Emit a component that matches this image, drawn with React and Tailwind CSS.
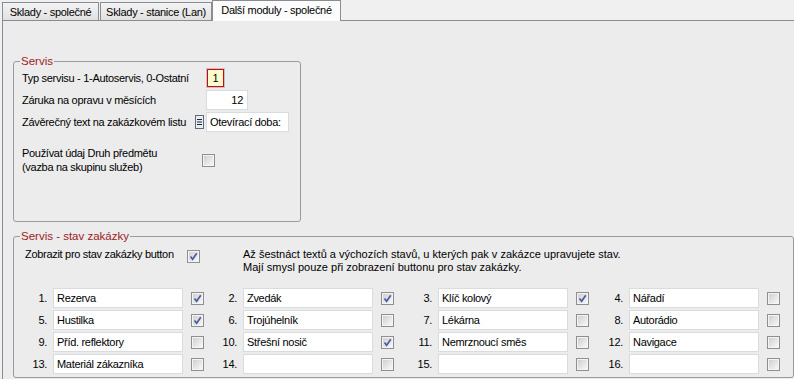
import React from "react";

const rows = [
  [
    [1, "Rezerva", true],
    [2, "Zvedák", true],
    [3, "Klíč kolový", true],
    [4, "Nářadí", false],
  ],
  [
    [5, "Hustilka", true],
    [6, "Trojúhelník", false],
    [7, "Lékárna", false],
    [8, "Autorádio", false],
  ],
  [
    [9, "Příd. reflektory", false],
    [10, "Střešní nosič", true],
    [11, "Nemrznoucí směs", false],
    [12, "Navigace", false],
  ],
  [
    [13, "Materiál zákazníka", false],
    [14, "", false],
    [15, "", false],
    [16, "", false],
  ],
];

function CheckBox({ checked }) {
  return (
    <span className="block w-[13px] h-[13px] border border-[#8e8f8f] bg-[#f4f4f4] p-[1px] shrink-0">
      <span className="block w-full h-full bg-gradient-to-br from-[#d0d0d0] to-[#f7f7f7]">
        {checked && (
          <svg width="9" height="9" viewBox="0 0 9 9">
            <path d="M1.5 4.5 L3.6 7.2 L7.8 1.2" fill="none" stroke="#4a5d9e" strokeWidth="1.7" />
          </svg>
        )}
      </span>
    </span>
  );
}

function TextBox({ value, className = "" }) {
  return (
    <div
      className={
        "h-[20px] bg-white border border-[#d8dbe0] leading-[18px] px-[3px] whitespace-nowrap overflow-hidden " +
        className
      }
    >
      {value}
    </div>
  );
}

function Tab({ label, width, active }) {
  if (active) {
    return (
      <div className="relative z-10 -mb-[1px] -ml-[1px] w-[129px] h-[21px] bg-[#fcfcfc] border border-b-0 border-[#898c95] text-center leading-[19px]">
        {label}
      </div>
    );
  }
  return (
    <div
      className={
        "h-[18px] bg-gradient-to-b from-[#f3f3f3] to-[#e1e1e1] border border-b-0 border-[#898c95] text-center leading-[19px] mr-[1px] " +
        width
      }
    >
      {label}
    </div>
  );
}

export default function App() {
  return (
    <div
      className="w-[794px] h-[379px] overflow-hidden bg-[#f0f0f0] text-[11px] tracking-[-0.3px] text-black"
      style={{ fontFamily: '"Liberation Sans", Arial, sans-serif' }}
    >
      {/* záložky */}
      <div className="flex items-end h-[20px] pl-[2px]">
        <Tab label="Sklady - společné" width="w-[97px]" />
        <Tab label="Sklady - stanice (Lan)" width="w-[112px]" />
        <Tab label="Další moduly - společné" active />
      </div>

      {/* stránka */}
      <div className="ml-[2px] h-[359px] border-t border-l border-[#898c95] bg-[#ececec] pl-[10px] pt-[34px]">
        {/* Servis */}
        <fieldset className="w-[288px] h-[167px] border border-[#9a9a9a] rounded-[3px] px-0">
          <legend className="ml-[6px] px-[1px] leading-[13px] text-[11.5px] tracking-normal text-[#9b1c1c]">Servis</legend>
          <div className="pl-[8px] flex flex-col gap-[2px]">
            <div className="flex items-center h-[20px]">
              <span className="w-[184px] whitespace-nowrap">Typ servisu - 1-Autoservis, 0-Ostatní</span>
              <div className="w-[19px] h-[20px] border border-[#b6c6d6]">
                <div className="w-full h-full border border-[#e00000] bg-[#fdfccf] text-center leading-[16px]">1</div>
              </div>
            </div>
            <div className="flex items-center h-[20px]">
              <span className="w-[184px] whitespace-nowrap">Záruka na opravu v měsících</span>
              <TextBox value="12" className="w-[42px] text-right pr-[4px]" />
            </div>
            <div className="flex items-center h-[20px]">
              <span className="w-[173px] whitespace-nowrap">Závěrečný text na zakázkovém listu</span>
              <svg width="9" height="14" viewBox="0 0 9 14" className="mr-[2px]">
                <rect x="0.5" y="0.5" width="8" height="13" fill="#e9ecf2" stroke="#5f6b7c" />
                <path d="M2 4.5h5M2 7h5M2 9.5h5" stroke="#1d2636" strokeWidth="1" />
              </svg>
              <TextBox value="Otevírací doba:" className="w-[83px] px-[2px]" />
            </div>
          </div>
          <div className="pl-[8px] mt-[14px] flex items-start">
            <div className="w-[180px] leading-[14px]">
              <div>Používat údaj Druh předmětu</div>
              <div>(vazba na skupinu služeb)</div>
            </div>
            <div className="mt-[8px]">
              <CheckBox checked={false} />
            </div>
          </div>
        </fieldset>

        {/* Servis - stav zakázky */}
        <fieldset className="mt-[8px] w-[781px] h-[148px] border border-[#9a9a9a] rounded-[3px]">
          <legend className="ml-[6px] px-[1px] leading-[13px] text-[11.5px] tracking-normal text-[#9b1c1c]">Servis - stav zakázky</legend>
          <div className="mt-[5px] flex items-start">
            <span className="pl-[11px] w-[173px] leading-[13px] whitespace-nowrap">Zobrazit pro stav zakázky button</span>
            <div className="mt-[2px]">
              <CheckBox checked />
            </div>
            <div className="ml-[43px] leading-[13px] whitespace-nowrap tracking-normal">
              <div>Až šestnáct textů a výchozích stavů, u kterých pak v zakázce upravujete stav.</div>
              <div>Mají smysl pouze při zobrazení buttonu pro stav zakázky.</div>
            </div>
          </div>

          <div className="mt-[14px] flex flex-col gap-[2px]">
            {rows.map((row, i) => (
              <div key={i} className="grid grid-cols-[190px_195px_191px_1fr] h-[20px]">
                {row.map(([n, text, checked]) => (
                  <div key={n} className="flex items-center">
                    <span className="w-[39px] pr-[6px] text-right">{n}.</span>
                    <TextBox value={text} className="w-[130px]" />
                    <span className="ml-[8px]">
                      <CheckBox checked={checked} />
                    </span>
                  </div>
                ))}
              </div>
            ))}
          </div>
        </fieldset>
      </div>
    </div>
  );
}
